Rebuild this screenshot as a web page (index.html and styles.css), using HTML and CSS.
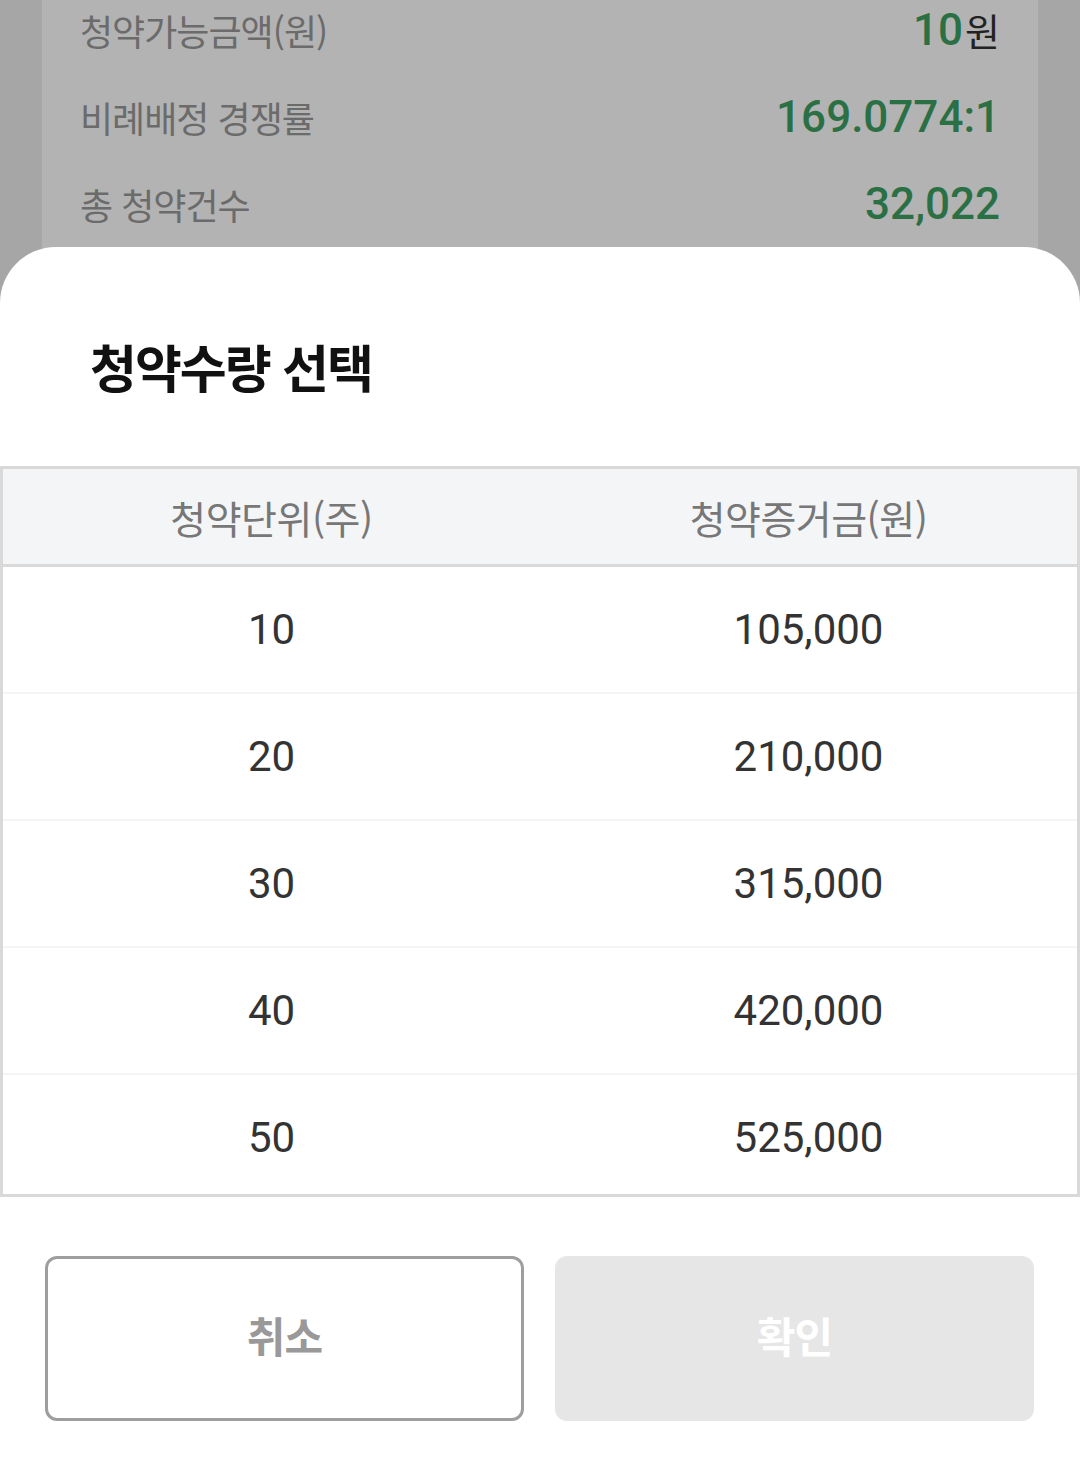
FILE: index.html
```html
<!DOCTYPE html>
<html lang="ko">
<head>
    <meta charset="UTF-8">
    <meta name="viewport" content="width=device-width, initial-scale=1.0">
    <title>청약수량 선택</title>
    <link rel="stylesheet" href="styles.css">
</head>
<body>
    <!-- 뒤쪽 청약 정보 화면 (딤 처리) -->
    <div class="page">
        <div class="info-card">
            <div class="info-row">
                <span class="info-label">청약가능금액(원)</span>
                <span class="info-value"><em>10</em><span class="unit">원</span></span>
            </div>
            <div class="info-row">
                <span class="info-label">비례배정 경쟁률</span>
                <span class="info-value"><em>169.0774:1</em></span>
            </div>
            <div class="info-row">
                <span class="info-label">총 청약건수</span>
                <span class="info-value"><em>32,022</em></span>
            </div>
        </div>
    </div>

    <!-- 바텀시트 -->
    <div class="sheet">
        <h2 class="sheet-title">청약수량 선택</h2>

        <div class="qty-table">
            <div class="qty-head">
                <div class="qty-cell">청약단위(주)</div>
                <div class="qty-cell">청약증거금(원)</div>
            </div>
            <div class="qty-body">
                <div class="qty-row">
                    <div class="qty-cell">10</div>
                    <div class="qty-cell">105,000</div>
                </div>
                <div class="qty-row">
                    <div class="qty-cell">20</div>
                    <div class="qty-cell">210,000</div>
                </div>
                <div class="qty-row">
                    <div class="qty-cell">30</div>
                    <div class="qty-cell">315,000</div>
                </div>
                <div class="qty-row">
                    <div class="qty-cell">40</div>
                    <div class="qty-cell">420,000</div>
                </div>
                <div class="qty-row">
                    <div class="qty-cell">50</div>
                    <div class="qty-cell">525,000</div>
                </div>
            </div>
        </div>

        <div class="sheet-actions">
            <button class="btn btn-cancel">취소</button>
            <button class="btn btn-confirm" disabled>확인</button>
        </div>
    </div>
</body>
</html>
```

FILE: styles.css
```css
/* 청약수량 선택 바텀시트 */
* {
    margin: 0;
    padding: 0;
    box-sizing: border-box;
}

body {
    font-family: 'Noto Sans CJK KR', 'Noto Sans', sans-serif;
    background: #a6a6a6;
    min-height: 100vh;
    overflow: hidden;
}

/* 뒤 화면 */
.page {
    padding: 0 42px;
}

.info-card {
    background: #b3b3b3;
    margin-top: -14px;
    padding: 0 38px;
    height: 300px;
}

.info-row {
    display: flex;
    justify-content: space-between;
    align-items: center;
    height: 87px;
}

.info-label {
    font-size: 36px;
    color: #6b6b6b;
    letter-spacing: -1px;
}

.info-value {
    display: flex;
    align-items: center;
}

.info-value em {
    font-style: normal;
    font-family: 'Roboto', sans-serif;
    font-weight: 500;
    font-size: 44px;
    color: #2b7045;
}

.info-value .unit {
    font-size: 38px;
    color: #222;
    margin-left: 2px;
}

/* 바텀시트 */
.sheet {
    position: fixed;
    top: 247px;
    left: 0;
    right: 0;
    bottom: 0;
    background: #fff;
    border-radius: 56px 56px 0 0;
}

.sheet-title {
    font-size: 51px;
    font-weight: 700;
    color: #111;
    letter-spacing: -2px;
    line-height: 60px;
    padding: 89px 0 0 90px;
    margin-bottom: 70px;
}

.qty-table {
    border: 3px solid #d9d9d9;
}

.qty-head {
    display: grid;
    grid-template-columns: 1fr 1fr;
    height: 98px;
    background: #f4f5f7;
    border-bottom: 3px solid #d9d9d9;
    font-size: 39px;
    color: #777;
    letter-spacing: -0.5px;
}

.qty-cell {
    display: flex;
    justify-content: center;
    align-items: center;
}

.qty-row {
    display: grid;
    grid-template-columns: 1fr 1fr;
    height: 127px;
    border-bottom: 2px solid #f4f4f4;
    font-family: 'Roboto', sans-serif;
    font-size: 42px;
    color: #333;
}

.qty-row:last-child {
    height: 119px;
    border-bottom: none;
    padding-top: 6px;
}

.sheet-actions {
    display: grid;
    grid-template-columns: 1fr 1fr;
    gap: 31px;
    padding: 59px 46px 0 45px;
}

.btn {
    height: 165px;
    border-radius: 12px;
    padding-bottom: 8px;
    font-family: 'Noto Sans CJK KR', sans-serif;
    font-size: 42px;
    font-weight: 700;
    letter-spacing: -1px;
}

.btn-cancel {
    background: #fff;
    border: 3px solid #9e9e9e;
    color: #999;
}

.btn-confirm {
    background: #e6e6e6;
    border: none;
    color: #fff;
}
```
